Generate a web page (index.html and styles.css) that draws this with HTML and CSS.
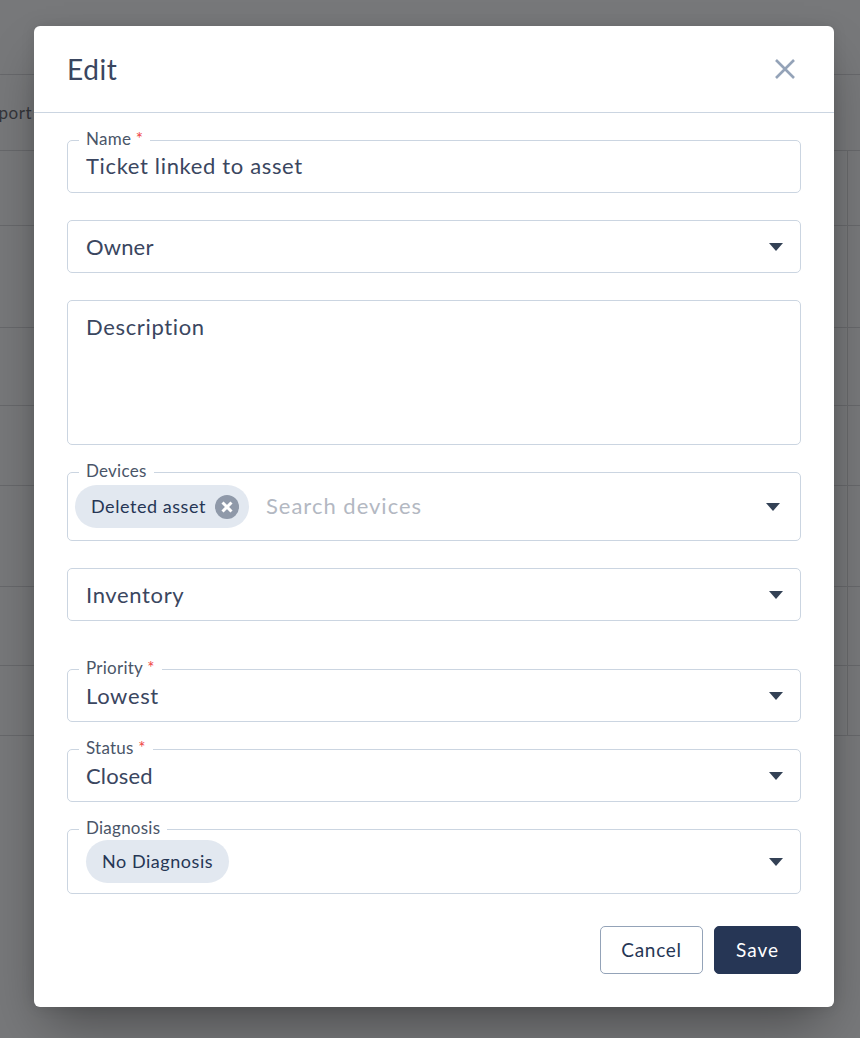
FILE: index.html
```html
<!DOCTYPE html>
<html lang="en">
<head>
<meta charset="utf-8">
<title>Edit</title>
<link rel="stylesheet" href="styles.css">
</head>
<body>
<div class="backdrop">
  <div class="bg-row h74"></div>
  <div class="bg-row h76"><span class="bg-cell">Support</span></div>
  <div class="bg-row h75 col"></div>
  <div class="bg-row h102 col"></div>
  <div class="bg-row h78 col"></div>
  <div class="bg-row h80 col"></div>
  <div class="bg-row h101 col"></div>
  <div class="bg-row h79 col"></div>
  <div class="bg-row h70 col"></div>
</div>
<div class="modal">
  <header class="modal-head">
    <h1>Edit</h1>
    <svg class="close" viewBox="0 0 20 20" aria-label="Close"><path d="M1 1 L19 19 M19 1 L1 19"/></svg>
  </header>
  <form class="modal-body">
    <div class="field">
      <span class="legend">Name <i>*</i></span>
      <span class="value raised">Ticket linked to asset</span>
    </div>
    <div class="field">
      <span class="value tight">Owner</span>
      <svg class="caret" viewBox="0 0 14 8"><path d="M0 0H14L7 8Z"/></svg>
    </div>
    <div class="field area">
      <span class="value">Description</span>
    </div>
    <div class="field devices">
      <span class="legend">Devices</span>
      <span class="chip">Deleted asset
        <svg class="chip-x" viewBox="0 0 24 24"><circle cx="12" cy="12" r="12"/><path d="M7.5 7.5L16.5 16.5M16.5 7.5L7.5 16.5"/></svg>
      </span>
      <span class="placeholder">Search devices</span>
      <svg class="caret left3" viewBox="0 0 14 8"><path d="M0 0H14L7 8Z"/></svg>
    </div>
    <div class="field">
      <span class="value">Inventory</span>
      <svg class="caret" viewBox="0 0 14 8"><path d="M0 0H14L7 8Z"/></svg>
    </div>
    <div class="field gap-top">
      <span class="legend">Priority <i>*</i></span>
      <span class="value">Lowest</span>
      <svg class="caret" viewBox="0 0 14 8"><path d="M0 0H14L7 8Z"/></svg>
    </div>
    <div class="field">
      <span class="legend">Status <i>*</i></span>
      <span class="value tight">Closed</span>
      <svg class="caret" viewBox="0 0 14 8"><path d="M0 0H14L7 8Z"/></svg>
    </div>
    <div class="field diagnosis">
      <span class="legend">Diagnosis</span>
      <span class="chip plain">No Diagnosis</span>
      <svg class="caret" viewBox="0 0 14 8"><path d="M0 0H14L7 8Z"/></svg>
    </div>
    <div class="actions">
      <button type="button" class="btn cancel">Cancel</button>
      <button type="button" class="btn save">Save</button>
    </div>
  </form>
</div>
</body>
</html>
```
FILE: styles.css
```css
* { box-sizing: border-box; }
html, body { margin: 0; height: 100%; }
body {
  width: 860px;
  height: 1038px;
  overflow: hidden;
  background: #77787a;
  font-family: "Lato", "Noto Sans", sans-serif;
  color: #3a4660;
}
.backdrop { display: flex; flex-direction: column; }
.bg-row { border-bottom: 1px solid #67686b; display: flex; flex: none; }
.col { background: linear-gradient(#67686b, #67686b) 847px 0 / 1px 100% no-repeat; }
.h74 { height: 75px; }
.h76 { height: 76px; align-items: center; }
.h75 { height: 75px; }
.h102 { height: 102px; }
.h78 { height: 78px; }
.h80 { height: 80px; }
.h101 { height: 101px; }
.h79 { height: 79px; }
.h70 { height: 70px; }
.bg-cell {
  width: 32px;
  display: flex;
  justify-content: flex-end;
  overflow: hidden;
  white-space: nowrap;
  font-size: 17px;
  color: #34353a;
  letter-spacing: .5px;
}
.modal {
  position: absolute;
  left: 34px;
  top: 26px;
  width: 800px;
  height: 981px;
  background: #fff;
  border-radius: 6px;
  box-shadow: 0 25px 50px -12px rgba(0,0,0,.4), 0 0 14px rgba(0,0,0,.1);
}
.modal-head {
  height: 87px;
  border-bottom: 1px solid #cbd5e1;
  display: flex;
  align-items: center;
  justify-content: space-between;
  padding: 0 39px 0 33px;
}
.modal-head h1 {
  margin: 0 0 1px;
  font-size: 28px;
  font-weight: 400;
  letter-spacing: .6px;
  color: #3a4660;
}
.close { width: 20px; height: 20px; margin-top: -1px; }
.close path { stroke: #94a3b8; stroke-width: 2.6; fill: none; }
.modal-body {
  display: flex;
  flex-direction: column;
  padding: 27px 33px 0;
  gap: 27px;
}
.field {
  position: relative;
  height: 53px;
  border: 1px solid #cbd5e1;
  border-radius: 5px;
  display: flex;
  align-items: center;
  padding: 0 18px;
  flex: none;
}
.area { height: 145px; align-items: flex-start; padding-top: 12px; }
.devices { height: 69px; padding: 0 7px; }
.diagnosis { height: 65px; padding: 0 18px; }
.gap-top { margin-top: 21px; }
.legend {
  position: absolute;
  left: 11px;
  top: -12px;
  padding: 0 7px;
  background: #fff;
  font-size: 17px;
  line-height: 20px;
  letter-spacing: .25px;
  color: #4a5568;
}
.legend i { color: #ef4444; font-style: normal; }
.value {
  font-size: 22px;
  letter-spacing: .65px;
  color: #3a4660;
}
.raised { margin-bottom: 2px; }
.tight { letter-spacing: .15px; }
.caret {
  position: absolute;
  right: 17px;
  top: 50%;
  width: 14px;
  height: 8px;
  margin-top: -4px;
}
.caret path { fill: #334155; }
.left3 { right: 20px; }
.chip {
  display: inline-flex;
  align-items: center;
  height: 43px;
  border-radius: 22px;
  background: #e2e8f0;
  font-size: 18px;
  letter-spacing: .55px;
  color: #263655;
  padding: 0 9px 2px 16px;
  gap: 9px;
  white-space: nowrap;
}
.chip.plain { padding: 0 16px 2px 16px; }
.chip-x { width: 24px; height: 24px; margin: 2px 1px 0 0; }
.chip-x circle { fill: #8f99a9; }
.chip-x path { stroke: #fff; stroke-width: 3; fill: none; }
.placeholder {
  margin-left: 17px;
  margin-bottom: 2px;
  font-size: 22px;
  letter-spacing: 1px;
  color: #b3b8c2;
}
.actions {
  display: flex;
  justify-content: flex-end;
  gap: 11px;
  margin-top: 5px;
}
.btn {
  height: 48px;
  border-radius: 5px;
  font-family: inherit;
  font-size: 19px;
  letter-spacing: .7px;
  padding: 0 0 2px;
  cursor: pointer;
}
.cancel { width: 103px; background: #fff; border: 1px solid #94a3b8; color: #263655; }
.save { width: 87px; background: #263655; border: 1px solid #263655; color: #fff; letter-spacing: 1px; }
```
